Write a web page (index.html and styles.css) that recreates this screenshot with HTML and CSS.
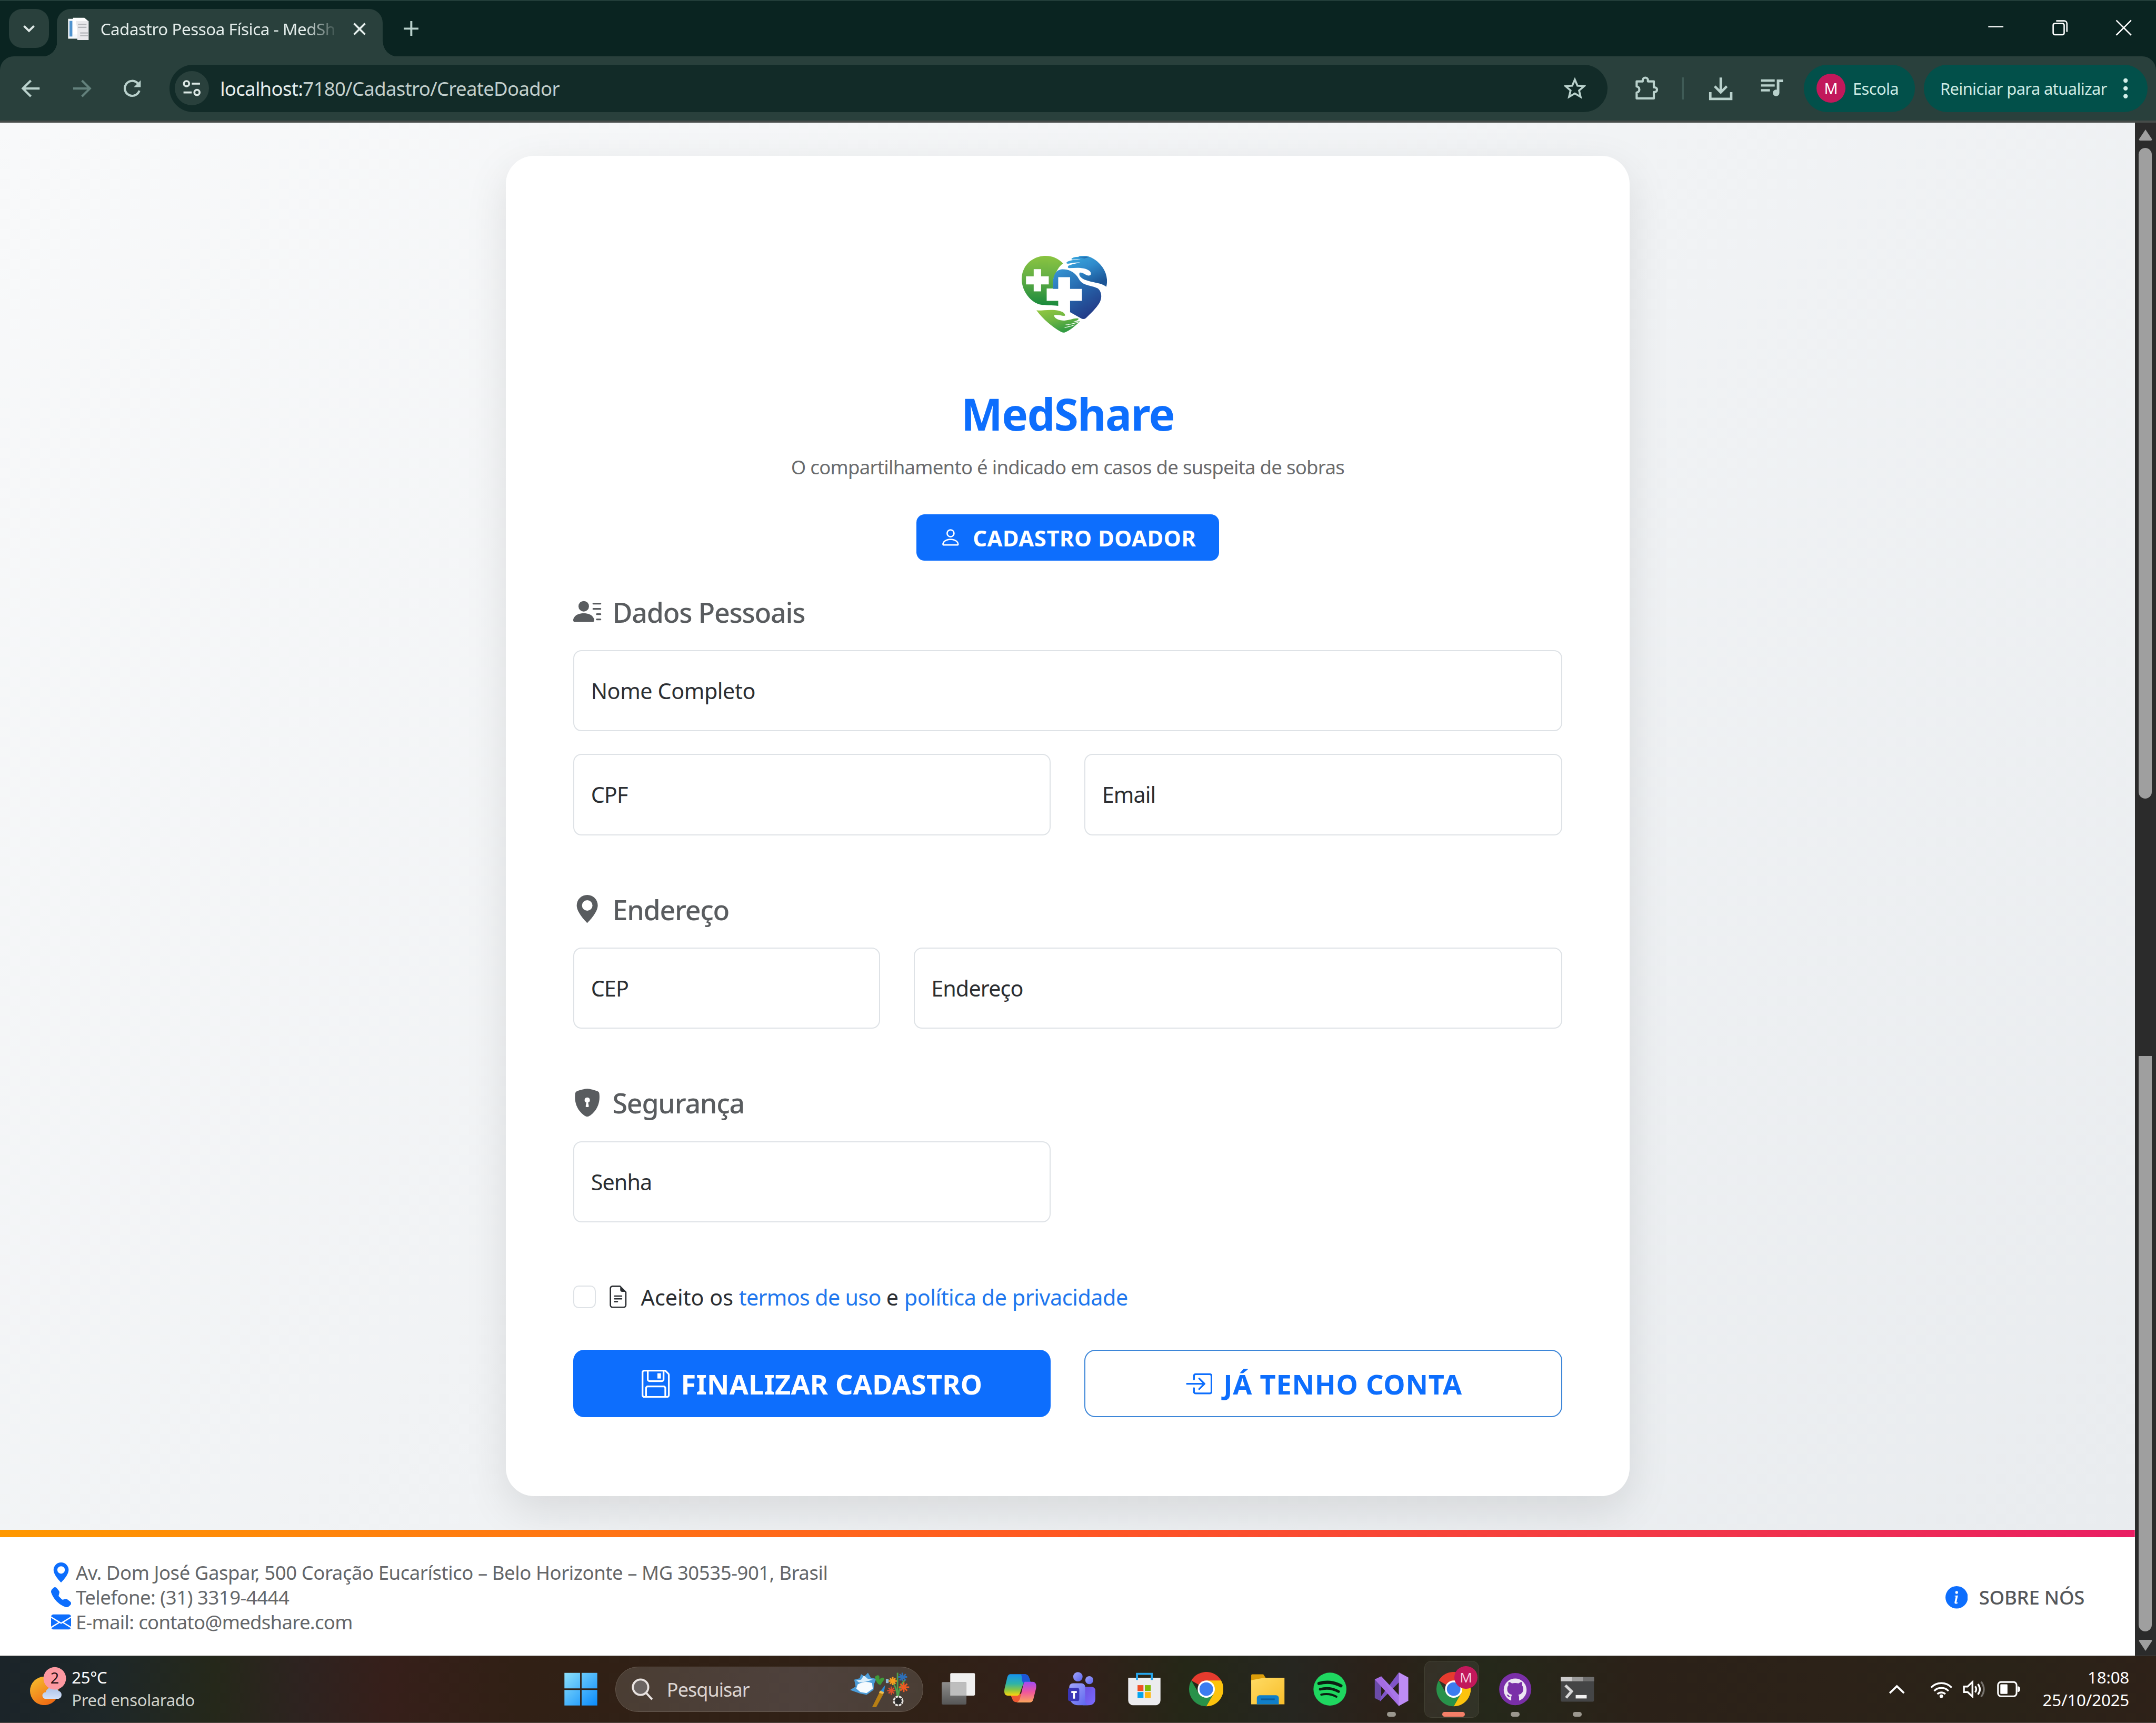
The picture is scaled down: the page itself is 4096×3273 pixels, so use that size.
FILE: index.html
```
<!DOCTYPE html>
<html lang="pt-BR">
<head>
<meta charset="utf-8">
<title>Cadastro Pessoa Física - MedShare</title>
<link rel="stylesheet" href="styles.css">
</head>
<body>
<div class="screen">
  <header class="tabstrip">
    <div class="tab-search"><svg class="i10" viewBox="0 0 10 10"><path d="M1.4 3.2 5 6.8l3.6-3.6" fill="none" stroke="#dfe9e7" stroke-width="1.5"/></svg></div>
    <div class="tab">
      <svg class="favicon" viewBox="0 0 16 16"><path d="M.5 1h9v14h-9z" fill="#f4f8fb"/><path d="M1.5 2.5h2v11h-2z" fill="#4f93cf"/><path d="M4 .3h8l2.6 2.2V12H4z" fill="#fff"/><path d="M6 2.500h9V16H7V9z" fill="#e9e9ec"/><path d="M7.500 5h6M7.500 7h6M9 11h6M9 13h6" stroke="#b4b6ba" stroke-width=".8"/></svg>
      <span class="tab-title">Cadastro Pessoa Física - MedSh</span>
      <svg class="i10" viewBox="0 0 10 10"><path d="m1 1 8 8M9 1 1 9" stroke="#e6efed" stroke-width="1.4"/></svg>
    </div>
    <svg class="plus" viewBox="0 0 11 11"><path d="M5.500 0v11M0 5.500h11" stroke="#b9d1cc" stroke-width="1.5"/></svg>
    <div class="win-controls">
      <svg class="i12" viewBox="0 0 12 12"><path d="M.5 5.300h11" stroke="#fff" stroke-width=".9"/></svg>
      <svg class="i12" viewBox="0 0 12 12"><rect x="1" y="2.900" width="8" height="8.200" rx="1.200" fill="none" stroke="#fff"/><path d="M3.200 1H9a2 2 0 0 1 2 2v6" fill="none" stroke="#fff"/></svg>
      <svg class="i12" viewBox="0 0 12 12"><path d="m.6.6 10.800 10.800M11.400.6.6 11.400" stroke="#fff" stroke-width="1"/></svg>
    </div>
  </header>
  <nav class="toolbar">
    <div class="nav-buttons">
      <svg class="i20" viewBox="0 0 20 20"><path d="M16.200 10H4.500M9.800 4.200 4 10l5.800 5.800" fill="none" stroke="#b9d1cc" stroke-width="1.6"/></svg>
      <svg class="i20" viewBox="0 0 20 20"><path d="M3.800 10h11.700M10.200 4.200 16 10l-5.800 5.800" fill="none" stroke="#63817c" stroke-width="1.6"/></svg>
      <svg class="i20" viewBox="0 0 20 20"><path d="M15.200 11.500A5.400 5.400 0 1 1 14 6.200L15.600 8" fill="none" stroke="#b9d1cc" stroke-width="1.6"/><path d="M16.200 4v5h-5z" fill="#b9d1cc"/></svg>
    </div>
    <div class="omnibox">
      <span class="site-info"><svg class="i14" viewBox="0 0 14 14" fill="none" stroke="#dbe7e4" stroke-width="1.400"><circle cx="3.200" cy="3.800" r="1.900"/><path d="M7 3.800h6M1 10.200h6"/><circle cx="10.800" cy="10.200" r="1.900"/></svg></span>
      <span class="url"><b>localhost:</b>7180/Cadastro/CreateDoador</span>
      <svg class="i16" viewBox="0 0 16 16"><path d="m8 1.600 1.900 4.400 4.800.4-3.600 3.100 1.100 4.700L8 11.700l-4.200 2.500 1.100-4.700L1.300 6.400 6.100 6z" fill="none" stroke="#b9d1cc" stroke-width="1.400"/></svg>
    </div>
    <svg class="i20 ext" viewBox="0 0 20 20"><path d="M3.200 4.800H7.600V4a1.900 1.900 0 0 1 3.800 0v.8h4.300v4.400h.6a1.700 1.700 0 0 1 0 3.400h-.6v4.600H3.200v-4.300c2.600-.4 2.600-4 0-4.400z" fill="none" stroke="#b9d1cc" stroke-width="1.600" stroke-linejoin="round"/></svg>
    <span class="sep"></span>
    <svg class="i20 dl" viewBox="0 0 20 20"><path d="M10 2v10M5.600 8.400 10 12.800l4.400-4.400M2.400 12.600v5h15.200v-5" fill="none" stroke="#b9d1cc" stroke-width="1.800"/></svg>
    <svg class="i20 media" viewBox="0 0 20 20"><path d="M2.500 4.200h10M2.500 7.800h10M2.500 11.300h6.500" stroke="#b9d1cc" stroke-width="1.700"/><path d="M14 3.400h4.500v2h-2.600v7.800a2.400 2.400 0 1 1-1.900-2.300z" fill="#b9d1cc"/></svg>
    <div class="pill profile"><span class="avatar">M</span><span>Escola</span></div>
    <div class="pill restart"><span>Reiniciar para atualizar</span><svg class="dots" viewBox="0 0 4 16" fill="#d3f0ea"><circle cx="2" cy="2.300" r="1.600"/><circle cx="2" cy="8" r="1.600"/><circle cx="2" cy="13.700" r="1.600"/></svg></div>
  </nav>

  <div class="viewport">
    <div class="page">
      <main class="stage">
        <section class="card">
          <svg class="logo" viewBox="490 208 532 512" preserveAspectRatio="none">
            <defs>
              <linearGradient id="gl" x1="0" y1="0" x2="0" y2="1"><stop offset="0" stop-color="#8ac440"/><stop offset=".45" stop-color="#62ae45"/><stop offset="1" stop-color="#18893c"/></linearGradient>
              <linearGradient id="gh" x1="0" y1="0" x2=".5" y2="1"><stop offset="0" stop-color="#94c840"/><stop offset=".5" stop-color="#6fb643"/><stop offset="1" stop-color="#329b42"/></linearGradient>
              <linearGradient id="bh" x1="0" y1="0" x2=".6" y2="1"><stop offset="0" stop-color="#3aaadf"/><stop offset=".5" stop-color="#2f8acb"/><stop offset="1" stop-color="#1c5596"/></linearGradient>
              <linearGradient id="bb" x1="0" y1="0" x2=".6" y2="1"><stop offset="0" stop-color="#3797d5"/><stop offset=".5" stop-color="#2669ae"/><stop offset="1" stop-color="#233d89"/></linearGradient>
            </defs>
            <path fill="url(#gl)" d="M640 208c42 0 79 18 108 50-18 16-32 34-42 58-18 28-22 58-20 110h-40v82h72v34c-38-5-80-2-108-8-64-14-120-92-120-172 0-86 66-154 150-154zM565 297v48h-48v54h48v46h46v-46h48v-54h-48v-48z"/>
            <path fill="url(#bb)" d="M686 428c-6-76 10-128 58-130 50 0 84 26 104 66 24 46 84 40 118 62 26 24 26 68 8 98-16 30-58 74-84 100q-14 10-28 2l-70-42V508h74v-80h-74v-78h-74v78z"/>
            <path fill="url(#bh)" d="M858 214c-18 0-42 0-54 10-8 8 0 10 12 8 18-4 30-4 42-2-26 4-66 6-84 18-10 8-2 14 10 12 24-6 46-10 72-8-26 6-54 12-74 22-8 8-2 16 6 16 32-2 66-6 98 4 22 8 38 18 36 36-2 10-14 12-28 6-18-10-30-18-42-16-10 20 12 40 38 50 46 20 94 16 128 44 20-80-28-170-110-202-16-5-34-4-50-2z"/>
            <path fill="url(#bh)" d="M852 209h38l20 8-28 8-42-6z"/>
            <path fill="url(#gh)" d="M582 572c42 2 92-10 140 2 24 6 42 18 38 34-20 2-44-10-68-4 0 22 32 36 64 36 36-2 58-18 88-14 4 10-18 16-34 22 16 2 28-4 44-2-30 28-56 54-84 68-12 8-20 8-34 2-56-34-112-84-154-144z"/>
            <path fill="none" stroke="#fff" stroke-width="4" d="M764 668c26 0 50-10 80-16M758 686c22-2 44-10 62-18"/>
          </svg>
          <h1 class="brand">MedShare</h1>
          <p class="tagline">O compartilhamento é indicado em casos de suspeita de sobras</p>
          <div class="badge"><svg class="i16" viewBox="0 0 16 16" fill="currentColor"><path d="M8 8a3 3 0 1 0 0-6 3 3 0 0 0 0 6m2-3a2 2 0 1 1-4 0 2 2 0 0 1 4 0m4 8c0 1-1 1-1 1H3s-1 0-1-1 1-4 6-4 6 3 6 4m-1-.004c-.001-.246-.154-.986-.832-1.664C11.516 10.680 10.289 10 8 10s-3.516.68-4.168 1.332c-.678.678-.83 1.418-.832 1.664z"/></svg><span>CADASTRO DOADOR</span></div>

          <h2 class="section first"><svg class="i204" viewBox="0 0 16 16" fill="currentColor"><path d="M6 8a3 3 0 1 0 0-6 3 3 0 0 0 0 6m-5 6s-1 0-1-1 1-4 6-4 6 3 6 4-1 1-1 1zM11 3.500a.5.5 0 0 1 .5-.5h4a.5.5 0 0 1 0 1h-4a.5.5 0 0 1-.5-.5m.5 2.500a.5.5 0 0 0 0 1h4a.5.5 0 0 0 0-1zm2 3a.5.5 0 0 0 0 1h2a.5.5 0 0 0 0-1zm0 3a.5.5 0 0 0 0 1h2a.5.5 0 0 0 0-1z"/></svg>Dados Pessoais</h2>
          <div class="row one"><label class="field wide-label">Nome Completo</label></div>
          <div class="row two second"><label class="field">CPF</label><label class="field">Email</label></div>

          <h2 class="section"><svg class="i204" viewBox="0 0 16 16" fill="currentColor"><path d="M8 16s6-5.686 6-10A6 6 0 0 0 2 6c0 4.314 6 10 6 10m0-7a3 3 0 1 1 0-6 3 3 0 0 1 0 6"/></svg>Endereço</h2>
          <div class="row third"><label class="field">CEP</label><label class="field">Endereço</label></div>

          <h2 class="section"><svg class="i204" viewBox="0 0 16 16" fill="currentColor"><path d="M8 0c-.69 0-1.843.265-2.928.56-1.110.3-2.229.655-2.887.87a1.540 1.540 0 0 0-1.044 1.262c-.596 4.477.787 7.795 2.465 9.990a11.800 11.800 0 0 0 2.517 2.453c.386.273.744.482 1.048.625.28.132.581.24.829.24s.548-.108.829-.24a7 7 0 0 0 1.048-.625 11.800 11.800 0 0 0 2.517-2.453c1.678-2.195 3.061-5.513 2.465-9.990a1.540 1.540 0 0 0-1.044-1.263 63 63 0 0 0-2.887-.87C9.843.266 8.690 0 8 0m0 5a1.500 1.500 0 0 1 .5 2.915l.385 1.990a.5.5 0 0 1-.491.595h-.788a.5.5 0 0 1-.49-.595l.384-1.990A1.500 1.500 0 0 1 8 5"/></svg>Segurança</h2>
          <div class="row two"><label class="field">Senha</label></div>

          <div class="terms">
            <span class="checkbox"></span>
            <svg class="i163" viewBox="0 0 16 16" fill="currentColor"><path d="M5.500 7a.5.5 0 0 0 0 1h5a.5.5 0 0 0 0-1zM5 9.500a.5.5 0 0 1 .5-.5h5a.5.5 0 0 1 0 1h-5a.5.5 0 0 1-.5-.5m0 2a.5.5 0 0 1 .5-.5h2a.5.5 0 0 1 0 1h-2a.5.5 0 0 1-.5-.5"/><path d="M9.500 0H4a2 2 0 0 0-2 2v12a2 2 0 0 0 2 2h8a2 2 0 0 0 2-2V4.500zm0 1v2A1.500 1.500 0 0 0 11 4.500h2V14a1 1 0 0 1-1 1H4a1 1 0 0 1-1-1V2a1 1 0 0 1 1-1z"/></svg>
            <span class="terms-text"><span class="t1">Aceito os </span><a>termos de uso</a> e <a class="privacy">política de privacidade</a></span>
          </div>

          <div class="row two actions">
            <div class="btn primary"><svg class="i204" viewBox="0 0 16 16" fill="currentColor"><path d="M11 2H9v3h2z"/><path d="M1.500 0h11.586a1.500 1.500 0 0 1 1.060.44l1.415 1.414A1.500 1.500 0 0 1 16 2.914V14.500a1.500 1.500 0 0 1-1.500 1.500h-13A1.500 1.500 0 0 1 0 14.500v-13A1.500 1.500 0 0 1 1.500 0M1 1.500v13a.5.5 0 0 0 .5.5H2v-4.500A1.500 1.500 0 0 1 3.500 9h9a1.500 1.500 0 0 1 1.500 1.500V15h.5a.5.5 0 0 0 .5-.5V2.914a.5.5 0 0 0-.146-.353l-1.415-1.415A.5.5 0 0 0 13.086 1H13v4.500A1.500 1.500 0 0 1 11.500 7h-7A1.500 1.500 0 0 1 3 5.500V1H1.500a.5.5 0 0 0-.5.5m3 4a.5.5 0 0 0 .5.5h7a.5.5 0 0 0 .5-.5V1H4zM3 15h10v-4.500a.5.5 0 0 0-.5-.5h-9a.5.5 0 0 0-.5.5z"/></svg><span>FINALIZAR CADASTRO</span></div>
            <div class="btn outline"><svg class="i204" viewBox="0 0 16 16" fill="currentColor"><path d="M6 3.500a.5.5 0 0 1 .5-.5h8a.5.5 0 0 1 .5.5v9a.5.5 0 0 1-.5.5h-8a.5.5 0 0 1-.5-.5v-2a.5.5 0 0 0-1 0v2A1.500 1.500 0 0 0 6.500 14h8a1.500 1.500 0 0 0 1.500-1.500v-9A1.500 1.500 0 0 0 14.500 2h-8A1.500 1.500 0 0 0 5 3.500v2a.5.5 0 0 0 1 0z"/><path d="M11.854 8.354a.5.5 0 0 0 0-.708l-3-3a.5.5 0 1 0-.708.708L10.293 7.500H1.500a.5.5 0 0 0 0 1h8.793l-2.147 2.146a.5.5 0 0 0 .708.708z"/></svg><span>JÁ TENHO CONTA</span></div>
          </div>
        </section>
      </main>
      <footer class="site-footer">
        <div class="contact">
          <div><svg class="i146" viewBox="0 0 16 16"><path d="M8 16s6-5.686 6-10A6 6 0 0 0 2 6c0 4.314 6 10 6 10m0-7a3 3 0 1 1 0-6 3 3 0 0 1 0 6"/></svg><span class="address">Av. Dom José Gaspar, 500 Coração Eucarístico – Belo Horizonte – MG 30535-901, Brasil</span></div>
          <div><svg class="i146" viewBox="0 0 16 16"><path d="M1.885.511a1.745 1.745 0 0 1 2.610.163L6.290 2.980c.329.423.445.974.315 1.494l-.547 2.190a.68.68 0 0 0 .178.643l2.457 2.457a.68.68 0 0 0 .644.178l2.189-.547a1.750 1.750 0 0 1 1.494.315l2.306 1.794c.829.645.905 1.870.163 2.611l-1.034 1.034c-.74.74-1.846 1.065-2.877.702a18.600 18.600 0 0 1-7.010-4.420 18.600 18.600 0 0 1-4.420-7.009c-.362-1.030-.037-2.137.703-2.877z"/></svg><span>Telefone: (31) 3319-4444</span></div>
          <div><svg class="i146" viewBox="0 0 16 16"><path d="M.05 3.555A2 2 0 0 1 2 2h12a2 2 0 0 1 1.950 1.555L8 8.414zM0 4.697v7.104l5.803-3.558zM6.761 8.830l-6.570 4.027A2 2 0 0 0 2 14h12a2 2 0 0 0 1.808-1.144l-6.570-4.027L8 9.586zm3.436-.586L16 11.801V4.697z"/></svg><span class="mail">E-mail: contato@medshare.com</span></div>
        </div>
        <div class="about"><svg class="i163" viewBox="0 0 16 16"><path d="M8 16A8 8 0 1 0 8 0a8 8 0 0 0 0 16m.93-9.412-1 4.705c-.07.34.029.533.304.533.194 0 .487-.07.686-.246l-.088.416c-.287.346-.92.598-1.465.598-.703 0-1.002-.422-.808-1.319l.738-3.468c.064-.293.006-.399-.287-.47l-.451-.081.082-.381 2.290-.287zM8 5.500a1 1 0 1 1 0-2 1 1 0 0 1 0 2"/></svg><span>SOBRE NÓS</span></div>
      </footer>
    </div>
    <div class="scrollbar">
      <svg class="arrow" viewBox="0 0 10 8"><path d="M5 0 9.800 7.200Q9.800 8 9 8H1Q.2 8 .2 7.200z" fill="#a0a0a0"/></svg>
      <span class="thumb upper"></span>
      <span class="thumb lower"></span>
      <svg class="arrow" viewBox="0 0 10 8"><path d="M5 8 .2.8Q.2 0 1 0h8q.8 0 .8.8z" fill="#a0a0a0"/></svg>
    </div>
  </div>

  <footer class="taskbar">
    <div class="weather">
      <svg class="weather-icon" viewBox="0 0 28 28">
        <defs><linearGradient id="sun" x1="0" y1="0" x2=".6" y2="1"><stop offset="0" stop-color="#f6c22f"/><stop offset="1" stop-color="#ef6c14"/></linearGradient><linearGradient id="cl" x1="0" y1="0" x2="0" y2="1"><stop offset="0" stop-color="#a9bfe6"/><stop offset="1" stop-color="#d3e2fa"/></linearGradient></defs>
        <circle cx="10.400" cy="17.600" r="10.400" fill="url(#sun)"/>
        <path d="M11.400 23.400a2.400 2.400 0 0 1 0-4.800 5 5 0 0 1 9.300-1 3 3 0 0 1 0 5.800z" fill="url(#cl)"/>
        <circle cx="18" cy="8.500" r="8.200" fill="#fd99a1"/>
        <text x="18" y="12.400" text-anchor="middle" font-family="Noto Sans, sans-serif" font-size="11" fill="#2a1012">2</text>
      </svg>
      <div class="weather-text"><span class="temp">25°C</span><span>Pred ensolarado</span></div>
    </div>
    <div class="app"><svg class="i25" viewBox="0 0 25 25"><defs><linearGradient id="win" x1="0" y1="0" x2="1" y2="1"><stop offset="0" stop-color="#8ce0fb"/><stop offset="1" stop-color="#0a8bfb"/></linearGradient></defs><path fill="url(#win)" d="M.5.700h11.400v11.300H.5zM13 .700h11.400v11.300H13zM.5 13.100h11.400v11.300H.5zM13 13.100h11.400v11.300H13z"/></svg></div>
    <div class="search">
      <svg class="i16" viewBox="0 0 16 16" fill="none" stroke="#e8e2e0" stroke-width="1.500"><circle cx="6.500" cy="6.500" r="5.600" fill="#6b6462"/><path d="m10.500 10.600 4.400 4.800"/></svg>
      <span>Pesquisar</span>
      <svg class="doodle" viewBox="0 0 44 26">
        <path d="M3 6 7 5l1-3 2.500 1.500L13 1l2 3.500 4 1-1.500 3.500-.5 4.500-5 3.500-5-1L0 13.500l4-2.500z" fill="#4b9cd8"/><path d="M4.500 6.500 8 6l2-3 3 2.500 3.500.5-5 1.500-5 .5z" fill="#d9edf9"/><path d="M5.500 9.500q5-3 10.500-1l.5 4-4.500 3.300-4.500-.8-3-2.500z" fill="#f6fbfe"/>
        <path d="M18 4c3-3 4 0 3 2 3-3 5-1 3 1l-2 3q-3-1-4-6z" fill="#3f9a3a"/><path d="M26 5.500h2v3h-2z" fill="#8db9d8"/>
        <path d="m25.500 10-1 6-3-1z" fill="#2c8bd8"/><path d="m21.500 15 3 1-5.500 10-3 .0z" fill="#b87f14"/><path d="m21 15.500 3 1 .6-1.500-2.800-1z" fill="#efc053"/>
        <path d="M34.500 1v19M34.500 18q-1-7-4-11M35 18q1-8 5-12" stroke="#4ea04c" stroke-width="1.100" fill="none"/>
        <path d="M31 4v6M28 7h6M29 5l4 4M33 5l-4 4" stroke="#f59d1d" stroke-width="1.200"/><path d="M30 11v6M27 14h6M28 12l4 4M32 12l-4 4" stroke="#de4f2b" stroke-width="1"/><path d="M39 8v7M35.500 11.500h7.500M36.500 9l5 5M41.500 9l-5 5" stroke="#ef5a22" stroke-width="1.200"/><path d="M38 1v6M35 4h6.500M36 2l4.500 4.500M40.500 2 36 6.500" stroke="#2d6fb8" stroke-width="1.100"/>
        <circle cx="35" cy="21.500" r="3.200" fill="#2c2b2a" stroke="#e9e6e2" stroke-width="1.300" stroke-dasharray="2 .6"/>
      </svg>
    </div>
    <div class="app"><svg class="i25" viewBox="0 0 25 25"><defs><linearGradient id="tv" x1="0" y1="0" x2="0" y2="1"><stop offset="0" stop-color="#8f8e8d"/><stop offset="1" stop-color="#565656"/></linearGradient></defs><rect x="6.600" y=".9" width="18" height="16.300" rx=".8" fill="#f0f0f0"/><rect x=".4" y="7.400" width="18" height="16.300" rx=".8" fill="url(#tv)"/><rect x="6.600" y="7.400" width="11.800" height="9.800" fill="#bebebe"/></svg></div>
    <div class="app"><svg class="i25" viewBox="0 0 25 25"><defs><linearGradient id="c1" x1="0" y1="0" x2="0" y2="1"><stop offset="0" stop-color="#1492f0"/><stop offset=".45" stop-color="#2fb3a6"/><stop offset=".75" stop-color="#8fc63e"/><stop offset="1" stop-color="#fbd50e"/></linearGradient><linearGradient id="c2" x1="0" y1="0" x2="0" y2="1"><stop offset="0" stop-color="#a04bf5"/><stop offset=".5" stop-color="#f0569c"/><stop offset="1" stop-color="#fba55c"/></linearGradient></defs><path d="M5 1.600h11q2.200.2 3 3l.8 2.600h-3.300l-2 1.500-3 8.500H3.200C.4 17.200.6 14 1 12L3 3.600Q3.600 1.800 5 1.600z" fill="url(#c1)"/><path d="M13 1.600h3q2.200.2 3 3l.8 2.600h-3.600l-1.600 1q-1.400-2-1-4z" fill="#1d56d8"/><path d="M5.500 17.200h5l2.500-1.500v6.300H9.500Q7.300 22 6.500 19.500z" fill="#ee5a33"/><path d="M15.500 7.200h5.700c3 0 3 3 2.600 5l-2 8q-.6 1.800-2.400 2H9.800q1.800-.8 2.400-3l2.400-10z" fill="url(#c2)"/></svg></div>
    <div class="app"><svg class="i25" viewBox="0 0 25 25"><defs><linearGradient id="t1" x1="0" y1="0" x2="1" y2="1"><stop offset="0" stop-color="#a2a6fb"/><stop offset="1" stop-color="#5b63ee"/></linearGradient><linearGradient id="t2" x1="0" y1="0" x2="1" y2="1"><stop offset="0" stop-color="#6a4fdc"/><stop offset="1" stop-color="#7a6bff"/></linearGradient></defs><circle cx="9.500" cy="3.500" r="3.400" fill="url(#t1)"/><circle cx="17.800" cy="6" r="2.900" fill="url(#t1)"/><path d="M13 10.800h6.500a2.700 2.700 0 0 1 2.700 2.700v6c0 3-2 4.700-4.700 4.700H13z" fill="url(#t2)"/><path d="M6 8.200h6a2.800 2.800 0 0 1 2.800 2.800v9.500c0 2 1 3.400 2 3.700H9.500a6.300 6.300 0 0 1-6.300-6.300V11A2.800 2.800 0 0 1 6 8.200z" fill="url(#t1)"/><rect x="2.300" y="11.600" width="8.200" height="9.600" rx="1.500" fill="#3a35b5"/><path d="M4.700 14.600h4M6.700 14.600v4.800" stroke="#fff" stroke-width="1.400"/></svg></div>
    <div class="app"><svg class="i25" viewBox="0 0 25 25"><path d="M7.300 5.500V1.400h10.800v4.100" fill="none" stroke="#27a7ee" stroke-width="1.500"/><path d="M.9 4.200h23.500v16.500a3.500 3.500 0 0 1-3.500 3.500H4.400a3.500 3.500 0 0 1-3.500-3.500z" fill="#ececee"/><path d="M7.300 5.800V4.200M18.100 5.800V4.200" stroke="#27a7ee" stroke-width="1.500"/><path d="M7.700 9.600h4.300v4.300H7.700z" fill="#f04f25"/><path d="M13 9.600h4.300v4.300H13z" fill="#7fb908"/><path d="M7.700 14.600h4.300v4.300H7.700z" fill="#04a4ee"/><path d="M13 14.600h4.300v4.300H13z" fill="#fdb813"/></svg></div>
    <div class="app"><svg class="i25" viewBox="0 0 48 48"><path d="M24 24 3.200 12A24 24 0 0 1 44.800 12z" fill="#e63b2e"/><path d="M24 12h20.800A24 24 0 0 1 24 48l10.400-18z" fill="#fcc30d"/><path d="M3.200 12 13.600 30 34.400 30 24 48A24 24 0 0 1 3.200 12z" fill="#28924a"/><circle cx="24" cy="24" r="12" fill="#fff"/><circle cx="24" cy="24" r="9.500" fill="#3b7cf0"/></svg></div>
    <div class="app"><svg class="i25" viewBox="0 0 25 25"><defs><linearGradient id="fo" x1="0" y1="0" x2="1" y2="1"><stop offset="0" stop-color="#fedb64"/><stop offset="1" stop-color="#f9be2b"/></linearGradient></defs><path d="M.4 2.500q0-.8.800-.8h8l2 3v4H.4z" fill="#dc9d09"/><path d="M.4 6 10 4.200h14.600v19.300H.4z" fill="url(#fo)"/><path d="M4.500 23.500v-4.600a2 2 0 0 1 2-2h12a2 2 0 0 1 2 2v4.600z" fill="#107fc9"/><path d="M7.500 19.900h10" stroke="#0b5d9c" stroke-width="1.200"/></svg></div>
    <div class="app"><svg class="i25" viewBox="0 0 25 25"><circle cx="12.500" cy="12.500" r="12" fill="#1fd760"/><path d="M4.500 8.400q8.500-2.400 16 1.700" stroke="#0b1f12" stroke-width="2.300" fill="none" stroke-linecap="round"/><path d="M5.400 12.600q7.200-1.800 13.400 1.700" stroke="#0b1f12" stroke-width="1.900" fill="none" stroke-linecap="round"/><path d="M6.200 16.500q6-1.300 11 1.500" stroke="#0b1f12" stroke-width="1.500" fill="none" stroke-linecap="round"/></svg></div>
    <div class="app running"><svg class="i25" viewBox="0 0 25 25"><path d="M.3 5.500 5 3.300v18L.3 19z" fill="#6b4ba8"/><path d="M17.800.4 5 17.500l-1 4L18 7.500z" fill="#8055c8"/><path d="M.3 5.500 5 3.200l13 13.800v8z" fill="#a56ce2"/><path d="M5 3.300 18 24.600V17z" fill="#a876e8"/><path d="M17.800.3 24.700 4v17l-6.900 3.800z" fill="#be8cf6"/></svg></div>
    <div class="app running active"><svg class="i25" viewBox="0 0 48 48"><path d="M24 24 3.200 12A24 24 0 0 1 44.800 12z" fill="#e63b2e"/><path d="M24 12h20.800A24 24 0 0 1 24 48l10.400-18z" fill="#fcc30d"/><path d="M3.200 12 13.600 30 34.400 30 24 48A24 24 0 0 1 3.200 12z" fill="#28924a"/><circle cx="24" cy="24" r="12" fill="#fff"/><circle cx="24" cy="24" r="9.500" fill="#3b7cf0"/></svg><span class="app-badge">M</span></div>
    <div class="app running"><svg class="i25" viewBox="0 0 25 25"><circle cx="12.500" cy="12.500" r="11.700" fill="#7a2fa8"/><path d="M12.500 4.800a8.300 8.300 0 0 0-2.900 16.100v-2.600q-2.600.4-3.300-1.900 1.700.4 2 1.300.6.500 1.400.2.100-.8.600-1.200-4-.8-3.600-4.800.1-1.300.9-2.200-.4-1.200.1-2.400 1.100 0 2.400 1 2.300-.6 4.800 0 1.300-1 2.400-1 .5 1.200.1 2.400.8.900.9 2.200.400 4-3.600 4.800.6.600.6 1.800v2.400A8.300 8.300 0 0 0 12.500 4.800z" fill="#ece6f2"/></svg></div>
    <div class="app running"><svg class="i25" viewBox="0 0 25 25"><path d="M.4 4.500a.8.800 0 0 1 .8-.8h22.600a.8.800 0 0 1 .8.800v16.300a.8.800 0 0 1-.8.800H1.200a.8.800 0 0 1-.8-.8z" fill="#444546"/><path d="M.4 6.800V3.700h8.300v3.100z" fill="#cbcbcb"/><path d="M8.700 3.700h8v3.100h-8z" fill="#9b9b9b"/><path d="M16.700 3.700h8v3.100h-8z" fill="#6e6e6e"/><path d="m3.800 9.800 4.500 4.300-4 4.700" stroke="#d8d8d8" stroke-width="2" fill="none"/><path d="M11.300 16.800h8v2.500h-8z" fill="#f1f1f1"/></svg></div>
    <div class="tray">
      <svg class="caret" viewBox="0 0 12 7"><path d="m.8 6.200 5.200-5 5.200 5" fill="none" stroke="#fff" stroke-width="1.400"/></svg>
      <svg class="wifi" viewBox="0 0 17 13" fill="none" stroke="#fff" stroke-width="1.300"><path d="M1 5.200a10.400 10.400 0 0 1 15 0M3.300 7.700a7.200 7.200 0 0 1 10.400 0M5.600 10a4.100 4.100 0 0 1 5.800 0"/><circle cx="8.500" cy="11.500" r="1" fill="#fff" stroke-width=".6"/></svg>
      <svg class="sound" viewBox="0 0 17 13" fill="none" stroke="#fff" stroke-width="1.300"><path d="M.8 4.500h2.700L7 1.200v10.600L3.500 8.500H.8z"/><path d="M9 4.300q1.500 2.200 0 4.400M11 2.700q2.800 3.800 0 7.600"/><path d="M13.300 1q4 5.500 0 11" stroke="#77736e"/></svg>
      <svg class="battery" viewBox="0 0 17 12"><rect x=".7" y=".8" width="13.500" height="10.400" rx="2.200" fill="none" stroke="#fff" stroke-width="1.200"/><rect x="2.400" y="2.500" width="5.200" height="7" rx=".5" fill="#fff"/><path d="M15 4h.6q1.200.3 1.200 2t-1.200 2H15z" fill="#fff"/></svg>
      <div class="clock"><span>18:08</span><span>25/10/2025</span></div>
    </div>
  </footer>
</div>
</body>
</html>
```
FILE: styles.css
```
/* 1rem is 1/156.8 of the window width; every size follows from it */
html { font-size: calc(100vw / 156.8); }
* { box-sizing: border-box; }
body { margin: 0; font-family: "Noto Sans", "Open Sans", sans-serif; overflow: hidden; }
h1, h2, p { margin: 0; }
svg { display: block; flex: none; }
.screen { height: 100vh; display: flex; flex-direction: column; overflow: hidden; background: #0a2421; }

.i10 { width: 1rem; height: 1rem; }
.i12 { width: 1.2rem; height: 1.2rem; }
.i14 { width: 1.4rem; height: 1.4rem; }
.i146 { width: 1.46rem; height: 1.46rem; }
.i16 { width: 1.6rem; height: 1.6rem; }
.i163 { width: 1.63rem; height: 1.63rem; }
.i20 { width: 2rem; height: 2rem; }
.i204 { width: 2.04rem; height: 2.04rem; }
.i25 { width: 2.5rem; height: 2.5rem; }

/* browser tabs */
.tabstrip { height: 4.08rem; display: flex; align-items: flex-start; padding: .63rem 1.75rem 0 .65rem; border-top: .05rem solid #35514c; }
.tab-search { width: 2.9rem; height: 2.8rem; border-radius: .95rem; background: #29403c; display: flex; align-items: center; justify-content: center; }
.tab { position: relative; width: 23.7rem; height: 3.45rem; margin-left: .6rem; border-radius: 1rem 1rem 0 0; background: #29403c; display: flex; align-items: center; padding: 0 1.2rem .6rem .75rem; }
.tab::before, .tab::after { content: ""; position: absolute; bottom: 0; width: 1.1rem; height: 1.1rem; }
.tab::before { left: -1.1rem; background: radial-gradient(circle at 0 0, transparent 1.08rem, #29403c 1.1rem); }
.tab::after { right: -1.1rem; background: radial-gradient(circle at 100% 0, transparent 1.08rem, #29403c 1.1rem); }
.favicon { width: 1.65rem; height: 1.65rem; }
.tab-title { width: 17.3rem; margin: 0 1.1rem 0 .75rem; font-size: 1.2rem; letter-spacing: -.0145em; line-height: 2rem; color: #e3ecea; white-space: nowrap; -webkit-mask-image: linear-gradient(90deg, #000 86%, transparent 101%); mask-image: linear-gradient(90deg, #000 86%, transparent 101%); }
.plus { width: 1.1rem; height: 1.1rem; margin: .85rem 0 0 1.5rem; }
.win-controls { margin: .73rem 0 0 auto; display: flex; gap: 3.45rem; }

/* address row */
.toolbar { height: 4.84rem; flex: none; display: flex; align-items: center; padding: 0 .6rem 0 1.25rem; background: #29403c; border-radius: 1rem 1rem 0 0; border-bottom: .17rem solid #464b49; }
.nav-buttons { display: flex; gap: 1.68rem; }
.omnibox { width: 104.6rem; height: 3.43rem; margin-left: 1.7rem; border-radius: 1.72rem; background: #122b28; display: flex; align-items: center; padding: 0 1.57rem 0 .4rem; }
.site-info { width: 2.5rem; height: 2.5rem; border-radius: 50%; background: #29403c; display: flex; align-items: center; justify-content: center; }
.url { flex: 1; margin-left: .8rem; font-size: 1.4rem; letter-spacing: -.0195em; color: #c2cfcc; }
.url b { font-weight: 400; color: #e6eeec; }
.ext { margin-left: 1.8rem; }
.sep { width: .15rem; height: 1.6rem; margin-left: 1.6rem; background: #3f5b56; }
.dl { margin-left: 1.7rem; }
.media { margin-left: 1.67rem; }
.pill { height: 3.43rem; border-radius: 1.72rem; background: #02504a; display: flex; align-items: center; color: #cdebe5; font-size: 1.18rem; letter-spacing: -.019em; white-space: nowrap; }
.profile { width: 8.05rem; margin-left: 1.38rem; padding-left: .9rem; gap: .55rem; }
.avatar { width: 2.1rem; height: 2.1rem; border-radius: 50%; background: #c2185b; color: #fff; display: flex; align-items: center; justify-content: center; font-size: 1.1rem; }
.restart { width: 16.3rem; margin-left: .65rem; padding: 0 1.42rem 0 1.2rem; justify-content: space-between; }
.dots { width: .4rem; height: 1.6rem; }

/* page area */
.viewport { flex: 1; min-height: 0; display: flex; background: #fff; }
.page { width: 155.25rem; display: flex; flex-direction: column; }
.stage { flex: 1; padding: 2.43rem 0 0 36.8rem; background: linear-gradient(135deg, #f8f9fa 0%, #e9ecef 100%); }
.card { width: 81.7rem; height: 97.45rem; border-radius: 2.05rem; background: #fff; box-shadow: 0 1rem 3.1rem rgba(0, 0, 0, .1); padding: 7.25rem 4.9rem 0; display: flex; flex-direction: column; align-items: center; }
.logo { width: 6.2rem; height: 5.58rem; margin-right: .48rem; }
.brand { margin-top: 3.93rem; height: 4rem; line-height: 4rem; font-size: 3.2rem; letter-spacing: -.0188em; font-weight: 700; color: #0d6efd; }
.tagline { margin-top: .85rem; height: 2rem; line-height: 2rem; font-size: 1.4rem; letter-spacing: -.0203em; color: #6a6b6d; white-space: nowrap; }
.badge { margin-top: 2.45rem; width: 22rem; height: 3.36rem; border-radius: .6rem; background: #0d6efd; color: #fff; display: flex; align-items: center; padding-left: 1.7rem; gap: .8rem; font-size: 1.6rem; font-weight: 700; letter-spacing: .0138em; white-space: nowrap; }
.section { align-self: flex-start; margin-top: 4.08rem; height: 2.6rem; display: flex; align-items: center; gap: .8rem; font-size: 1.99rem; font-weight: 500; letter-spacing: -.024em; color: #595c5f; }
.section.first { margin-top: 2.42rem; }
.row { align-self: stretch; margin-top: 1.5rem; display: grid; column-gap: 2.45rem; }
.row.two { grid-template-columns: 1fr 1fr; }
.row.second { margin-top: 1.65rem; }
.row.third { grid-template-columns: 22.3rem 1fr; }
.field { height: 5.9rem; border: .1rem solid #dee2e6; border-radius: .6rem; display: flex; align-items: center; padding-left: 1.2rem; font-size: 1.58rem; letter-spacing: -.021em; color: #2b2e32; }
.wide-label { letter-spacing: -.01em; }
.terms { align-self: flex-start; margin-top: 4.42rem; height: 2rem; display: flex; align-items: center; color: #2b2e32; }
.checkbox { width: 1.63rem; height: 1.63rem; border: .1rem solid #dee2e6; border-radius: .4rem; margin-right: .8rem; }
.terms-text { margin-left: .85rem; font-size: 1.58rem; letter-spacing: -.0165em; white-space: nowrap; }
.t1 { letter-spacing: 0; }
.terms a { color: #2077ee; }
.terms .privacy { letter-spacing: -.0105em; margin-left: .05rem; }
.actions { margin-top: 2.85rem; }
.btn { height: 4.9rem; border-radius: .8rem; display: flex; align-items: center; justify-content: center; gap: .8rem; font-size: 2rem; font-weight: 700; white-space: nowrap; }
.primary { background: #0d6efd; color: #fff; letter-spacing: .004em; }
.outline { border: .1rem solid #3d86d8; color: #0d6efd; letter-spacing: .015em; }

/* site footer */
.site-footer { height: 9.15rem; flex: none; background: linear-gradient(90deg, #ff9800, #ff5722 50%, #e91e63) top / 100% .55rem no-repeat #fff; padding: .68rem 3.65rem 0 3.7rem; display: flex; align-items: center; justify-content: space-between; color: #65676a; font-size: 1.4rem; }
.site-footer svg { fill: #0d6efd; }
.contact > div { height: 1.8rem; display: flex; align-items: center; gap: .35rem; letter-spacing: -.0143em; white-space: nowrap; }
.contact .address { letter-spacing: -.0128em; }
.contact .mail { letter-spacing: -.0195em; }
.about { display: flex; align-items: center; gap: .82rem; font-weight: 500; letter-spacing: -.007em; color: #55575a; }

/* scrollbar */
.scrollbar { flex: 1; background: #2b2b2b; display: flex; flex-direction: column; align-items: center; padding: .5rem 0 .35rem; }
.arrow { width: 1rem; height: .8rem; }
.thumb { width: .95rem; border-radius: .5rem; background: #9f9f9f; }
.upper { height: 47.3rem; margin-top: .55rem; }
.lower { height: 41.85rem; margin: auto 0 .6rem; border-radius: 0 0 .5rem .5rem; }

/* taskbar */
.taskbar { height: 4.9rem; flex: none; display: flex; align-items: center; border-top: .06rem solid #4b4745; border-bottom: .04rem solid #5a514c; background: linear-gradient(90deg, #1b2429 0%, #1e2728 5%, #25281a 10%, #2e2320 14%, #361f1a 18%, #312015 24%, #302116 42%, #32201a 50%, #252717 55%, #262620 60%, #2b2119 64%, #25281a 69%, #2b2118 76%, #2c2218 85%, #2a2318 93%, #2e2118 100%); color: #fff; }
.weather { width: 40rem; padding-left: 2.17rem; display: flex; align-items: center; }
.weather-icon { width: 2.8rem; height: 2.8rem; margin-top: -.5rem; }
.weather-text { margin: -.1rem 0 0 .25rem; display: flex; flex-direction: column; font-size: 1.19rem; line-height: 1.63rem; letter-spacing: -.012em; color: #d0d2cb; }
.temp { color: #fff; }
.app { position: relative; width: 4.5rem; height: 4.1rem; display: flex; align-items: center; justify-content: center; }
.running::after { content: ""; position: absolute; bottom: .07rem; left: calc(50% - .33rem); width: .66rem; height: .33rem; border-radius: .17rem; background: #9b978e; }
.active::before { content: ""; position: absolute; inset: 0 .4rem 0 .15rem; border: .06rem solid #444335; border-radius: .5rem; background: rgba(255, 255, 255, .06); }
.active svg { position: relative; }
.active::after { width: 1.66rem; left: calc(50% - .83rem); background: #f47f68; }
.app-badge { position: absolute; top: .35rem; right: .52rem; width: 1.65rem; height: 1.65rem; border-radius: 50%; background: #c2185b; color: #f6cfe0; font-size: 1rem; line-height: 1.65rem; text-align: center; }
.search { width: 22.4rem; height: 3.28rem; margin: 0 .3rem 0 .26rem; border-radius: 1.64rem; border: .07rem solid #675a50; background: linear-gradient(90deg, #4a3d33, #4e413c 60%, #4a3e35); display: flex; align-items: center; padding: 0 .9rem 0 1.15rem; font-size: 1.38rem; letter-spacing: -.027em; color: #dcd5d2; }
.search span { margin-left: .95rem; flex: 1; }
.doodle { width: 4.4rem; height: 2.6rem; }
.tray { margin-left: auto; display: flex; align-items: center; padding-right: 1.95rem; }
.caret { width: 1.2rem; height: .7rem; }
.wifi { width: 1.7rem; height: 1.3rem; margin-left: 1.8rem; }
.sound { width: 1.7rem; height: 1.3rem; margin-left: .7rem; }
.battery { width: 1.7rem; height: 1.2rem; margin-left: .78rem; }
.clock { margin: -.1rem 0 0 1.63rem; display: flex; flex-direction: column; align-items: flex-end; font-size: 1.2rem; line-height: 1.63rem; letter-spacing: -.007em; }
```
